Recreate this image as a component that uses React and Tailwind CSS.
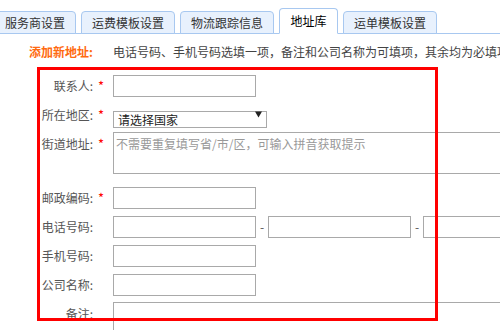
import { useState } from "react";

const tabs = [
  { name: "服务商设置", width: "w-[82px]" },
  { name: "运费模板设置", width: "w-[94px]" },
  { name: "物流跟踪信息", width: "w-[94px]" },
  { name: "地址库", width: "w-[59px]" },
  { name: "运单模板设置", width: "w-[94px]" },
];

function Label({ text, required, top }) {
  return (
    <div className={`flex w-[113px] shrink-0 ${top ? "items-start pt-[4px]" : "items-center"}`}>
      <span className="w-[93px] text-right text-[12px] leading-[16px] text-[#555] whitespace-nowrap">{text}</span>
      {required && <span className="ml-[5px] text-[13px] leading-[16px] text-[#f00]">*</span>}
    </div>
  );
}

function TextInput({ width = "w-[143px]" }) {
  return <input type="text" className={`${width} h-full shrink-0 border border-[#a9a9a9] bg-white px-[2px] text-[12px] outline-none`} />;
}

function App() {
  const [activeTab, setActiveTab] = useState(3);

  return (
    <div className="relative w-[500px] h-[330px] overflow-hidden bg-white font-['Microsoft_YaHei','Noto_Sans_CJK_SC',sans-serif]">
      {/* tabs */}
      <div className="flex items-end h-[34px] border-b border-[#a8c8f0] ml-[-6px]">
        {tabs.map((tab, index) => (
          <button
            key={tab.name}
            onClick={() => setActiveTab(index)}
            className={`${tab.width} mr-[5px] -mb-px shrink-0 border border-[#a8c8f0] rounded-t-[4px] text-[12px] leading-[16px] ${
              activeTab === index
                ? "h-[26px] bg-white border-b-white text-black"
                : "h-[23px] bg-[#e8f1fd] text-[#333]"
            }`}
          >
            {tab.name}
          </button>
        ))}
      </div>

      <div className="flex items-center h-[20px] mt-[8px]">
        <div className="w-[113px] shrink-0 flex">
          <span className="w-[93px] text-right text-[12px] font-bold text-[#ff6a10] whitespace-nowrap">添加新地址:</span>
        </div>
        <span className="text-[12px] text-[#444] whitespace-nowrap">
          电话号码、手机号码选填一项，备注和公司名称为可填项，其余均为必填项
        </span>
      </div>

      <div className="flex h-[22px] mt-[13px]">
        <Label text="联系人:" required />
        <TextInput />
      </div>

      <div className="flex h-[17px] mt-[9px]">
        <Label text="所在地区:" required />
        <div className="relative w-[154px] h-full shrink-0">
          <select className="appearance-none w-full h-full border border-[#a9a9a9] bg-white pl-[4px] text-[12px] leading-[15px] text-[#222] outline-none">
            <option>请选择国家</option>
          </select>
          <svg className="absolute right-[5px] top-[5px] pointer-events-none" width="7" height="7" viewBox="0 0 7 7">
            <path d="M0 0.5 H7 L3.5 6.5 Z" fill="#222" />
          </svg>
        </div>
      </div>

      <div className="flex h-[42px] mt-[9px]">
        <Label text="街道地址:" required top />
        <textarea
          placeholder="不需要重复填写省/市/区，可输入拼音获取提示"
          className="w-[420px] h-full shrink-0 resize-none border border-[#a9a9a9] px-[2px] py-[3px] text-[12px] leading-[16px] placeholder:text-[#999] outline-none"
        />
      </div>

      <div className="flex h-[22px] mt-[13px]">
        <Label text="邮政编码:" required />
        <TextInput />
      </div>

      <div className="flex h-[22px] mt-[7px]">
        <Label text="电话号码:" />
        <TextInput />
        <span className="w-[12px] shrink-0 text-center text-[12px] leading-[22px] text-[#555]">-</span>
        <TextInput />
        <span className="w-[12px] shrink-0 text-center text-[12px] leading-[22px] text-[#555]">-</span>
        <TextInput />
      </div>

      <div className="flex h-[22px] mt-[7px]">
        <Label text="手机号码:" />
        <TextInput />
      </div>

      <div className="flex h-[22px] mt-[7px]">
        <Label text="公司名称:" />
        <TextInput />
      </div>

      <div className="flex h-[50px] mt-[6px]">
        <Label text="备注:" top />
        <textarea className="w-[420px] h-full shrink-0 resize-none border border-[#a9a9a9] px-[2px] text-[12px] outline-none" />
      </div>

      {/* red annotation frame */}
      <div className="absolute left-[37px] top-[67px] w-[401px] h-[254px] border-[3px] border-[#f00] pointer-events-none" />
    </div>
  );
}

export default App;
